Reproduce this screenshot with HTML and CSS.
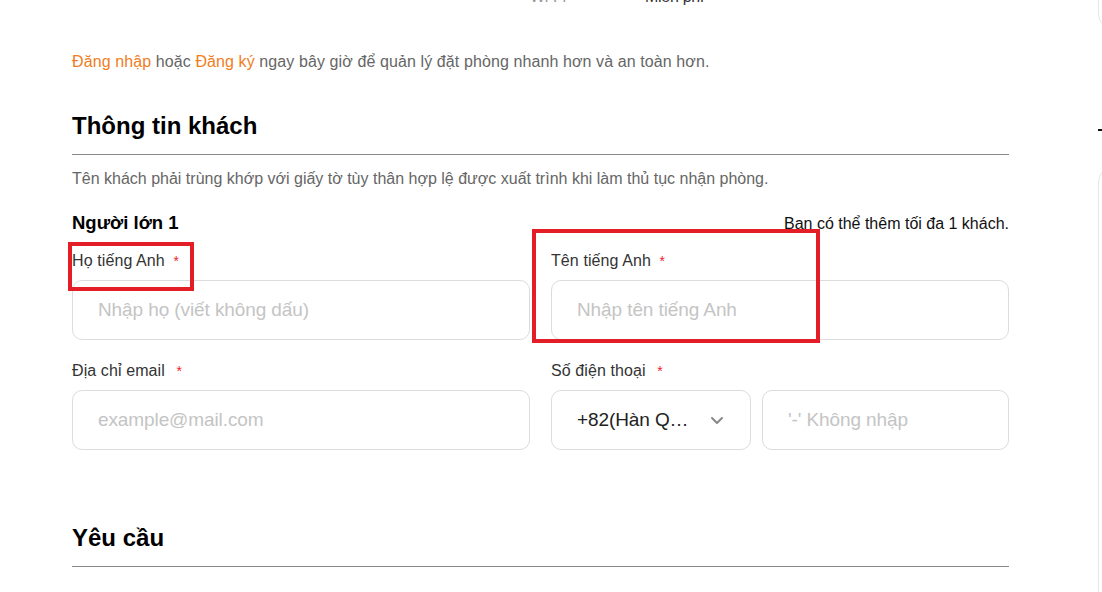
FILE: index.html
```html
<!DOCTYPE html>
<html lang="vi">
<head>
<meta charset="utf-8">
<title>Thông tin khách</title>
<link rel="stylesheet" href="styles.css">
</head>
<body>
<div class="page">
  <main class="main">
    <div class="cut-row">
      <span class="cut-a">Wi-Fi</span>
      <span class="cut-b">Miễn phí</span>
    </div>
    <p class="promo"><a class="link">Đăng nhập</a> hoặc <a class="link">Đăng ký</a> ngay bây giờ để quản lý đặt phòng nhanh hơn và an toàn hơn.</p>

    <section class="guest">
      <h2 class="section-title">Thông tin khách</h2>
      <p class="note">Tên khách phải trùng khớp với giấy tờ tùy thân hợp lệ được xuất trình khi làm thủ tục nhận phòng.</p>
      <div class="adult-head">
        <h3 class="adult-title">Người lớn 1</h3>
        <span class="adult-hint">Bạn có thể thêm tối đa 1 khách.</span>
      </div>
      <div class="form">
        <div class="grid">
          <div class="field">
            <label class="label">Họ tiếng Anh <span class="req">*</span></label>
            <div class="input"><span class="ph">Nhập họ (viết không dấu)</span></div>
          </div>
          <div class="field">
            <label class="label">Tên tiếng Anh <span class="req">*</span></label>
            <div class="input"><span class="ph">Nhập tên tiếng Anh</span></div>
          </div>
          <div class="field">
            <label class="label">Địa chỉ email <span class="req req-wide">*</span></label>
            <div class="input"><span class="ph">example@mail.com</span></div>
          </div>
          <div class="field">
            <label class="label">Số điện thoại <span class="req req-wide">*</span></label>
            <div class="phone">
              <div class="input select">
                <span class="val">+82(Hàn Q…</span>
                <svg class="chev" width="14" height="9" viewBox="0 0 14 9"><path d="M2 2l5 5 5-5" fill="none" stroke="#888" stroke-width="2" stroke-linecap="round" stroke-linejoin="round"/></svg>
              </div>
              <div class="input"><span class="ph">'-' Không nhập</span></div>
            </div>
          </div>
        </div>
        <div class="mark mark-1"></div>
        <div class="mark mark-2"></div>
      </div>
    </section>

    <section class="request">
      <h2 class="section-title">Yêu cầu</h2>
    </section>
  </main>
  <aside class="aside">
    <div class="card card-top"></div>
    <div class="dash"></div>
    <div class="card card-bottom"></div>
  </aside>
</div>
</body>
</html>
```

FILE: styles.css
```css
html, body {
  margin: 0;
  padding: 0;
  background: #fff;
  overflow: hidden;
}
body {
  font-family: "Liberation Sans", Arial, sans-serif;
  color: #000;
  width: 1102px;
  height: 592px;
}
.page {
  display: flex;
  align-items: flex-start;
}
.main {
  width: 937px;
  flex-shrink: 0;
  padding: 0 89px 0 72px;
}
.cut-row {
  margin-top: -12px;
  height: 18px;
  font-size: 16px;
  line-height: 18px;
  display: flex;
  padding-left: 458px;
  letter-spacing: -0.3px;
}
.cut-a { color: #999; width: 115px; }
.cut-b { color: #333; }

.promo {
  margin: 46px 0 0;
  font-size: 16px;
  line-height: 20px;
  color: #666;
  letter-spacing: 0.1px;
}
.link { color: #f07d23; }

.section-title {
  margin: 0;
  font-size: 24px;
  line-height: 28px;
  font-weight: 700;
  padding-bottom: 14px;
  border-bottom: 1px solid #888;
}
.guest { margin-top: 40px; }
.note {
  margin: 14px 0 0;
  font-size: 16px;
  line-height: 20px;
  color: #666;
}
.adult-head {
  margin-top: 23px;
  display: flex;
  justify-content: space-between;
  align-items: baseline;
}
.adult-title {
  margin: 0;
  font-size: 18.5px;
  line-height: 22px;
  font-weight: 700;
}
.adult-hint {
  font-size: 16px;
  color: #111;
}
.form {
  position: relative;
  margin-top: 17px;
}
.grid {
  display: grid;
  grid-template-columns: 1fr 1fr;
  column-gap: 21px;
  row-gap: 21px;
}
.field {
  display: flex;
  flex-direction: column;
  gap: 9px;
}
.label {
  font-size: 16px;
  line-height: 20px;
  color: #333;
  letter-spacing: 0.1px;
}
.req {
  color: #f0222d;
  margin-left: 4px;
  font-size: 14px;
}
.req-wide { margin-left: 7px; }
.input {
  box-sizing: border-box;
  height: 60px;
  border: 1px solid #dcdcdc;
  border-radius: 10px;
  display: flex;
  align-items: center;
  padding: 0 25px;
  font-size: 19px;
}
.ph {
  color: #c4c4c4;
  letter-spacing: -0.1px;
}
.phone {
  display: grid;
  grid-template-columns: 200px 1fr;
  gap: 11px;
}
.select {
  justify-content: space-between;
  padding-right: 26px;
}
.val {
  color: #222;
  letter-spacing: -0.1px;
}
.chev { display: block; }

.mark {
  position: absolute;
  border: 4px solid #e41e26;
  box-sizing: border-box;
}
.mark-1 {
  left: -4px;
  top: -9px;
  width: 126px;
  height: 49px;
}
.mark-2 {
  left: 460px;
  top: -22px;
  width: 288px;
  height: 114px;
}

.request { margin-top: 74px; }

.aside {
  width: 300px;
  flex-shrink: 0;
}
.card {
  box-sizing: border-box;
  border: 1px solid #e6e6e6;
  border-radius: 18px;
}
.card-top {
  margin-top: -100px;
  height: 131px;
}
.dash {
  margin-top: 98px;
  width: 6px;
  height: 2px;
  background: #111;
}
.card-bottom {
  margin-top: 34px;
  height: 500px;
}
```
